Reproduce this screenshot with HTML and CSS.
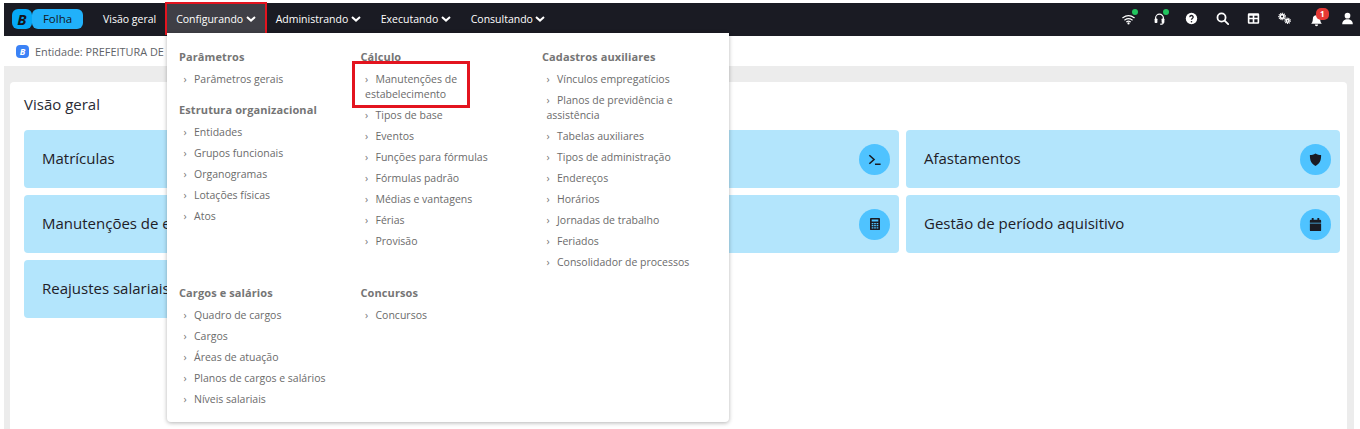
FILE: index.html
```html
<!DOCTYPE html>
<html lang="pt-BR">
<head>
<meta charset="utf-8">
<title>Folha</title>
<link rel="stylesheet" href="styles.css">
</head>
<body>
<div class="page">
  <header class="nav">
    <div class="brand"><span class="brand-b">B</span><span class="brand-name">Folha</span></div>
    <nav class="menu">
      <a class="menu-item">Visão geral</a>
      <a class="menu-item active">Configurando <svg class="chev" viewBox="0 0 10 6"><path d="M1 1l4 3.6L9 1"/></svg></a>
      <a class="menu-item">Administrando <svg class="chev" viewBox="0 0 10 6"><path d="M1 1l4 3.6L9 1"/></svg></a>
      <a class="menu-item">Executando <svg class="chev" viewBox="0 0 10 6"><path d="M1 1l4 3.6L9 1"/></svg></a>
      <a class="menu-item">Consultando <svg class="chev" viewBox="0 0 10 6"><path d="M1 1l4 3.6L9 1"/></svg></a>
    </nav>
    <div class="tools">
      <span class="tool"><svg viewBox="0 0 16 16"><path class="s" d="M1 7c4.200-3 9.800-3 14 0M3.400 9.700c2.800-2 6.400-2 9.200 0M5.800 12c1.400-.8 3-.8 4.400 0"/><circle class="f" cx="8" cy="14" r="1.400"/></svg><i class="dot"></i></span>
      <span class="tool"><svg viewBox="0 0 16 16"><path class="s" d="M3.200 10V7.500a4.800 4.800 0 0 1 9.600 0V10"/><rect class="f" x="2" y="8" width="3.400" height="5.500" rx="1"/><rect class="f" x="10.600" y="8" width="3.400" height="5.500" rx="1"/><path class="s" d="M12.500 13.500c0 1-1 1.500-3 1.500"/></svg><i class="dot"></i></span>
      <span class="tool"><svg viewBox="0 0 16 16"><circle class="f" cx="8" cy="8" r="7"/><path class="q" d="M6 6.300a2 2 0 1 1 3 1.700c-.7.400-1 .8-1 1.500"/><circle class="d" cx="8" cy="12" r="1"/></svg></span>
      <span class="tool"><svg viewBox="0 0 16 16"><circle class="s2" cx="6.800" cy="6.800" r="5"/><path class="s2" d="M10.600 10.600l4.400 4.400"/></svg></span>
      <span class="tool"><svg viewBox="0 0 16 16"><path class="f" fill-rule="evenodd" d="M2.500 1.500h11A1.500 1.500 0 0 1 15 3v10a1.500 1.500 0 0 1-1.500 1.500h-11A1.500 1.500 0 0 1 1 13V3a1.500 1.500 0 0 1 1.500-1.500zM3 4.500V7h4V4.500zm6 0V7h4V4.500zM3 9v3.500h4V9zm6 0v3.500h4V9z"/></svg></span>
      <span class="tool"><svg viewBox="0 0 16 16"><circle class="cog" cx="5" cy="5.500" r="2.300"/><circle class="cog-t" cx="5" cy="5.500" r="4"/><circle class="cog small" cx="11.800" cy="10.800" r="1.800"/><circle class="cog-t" cx="11.800" cy="10.800" r="3.300"/></svg></span>
      <span class="tool bell"><svg viewBox="0 0 16 16"><path class="f" d="M8 1.500a4.500 4.500 0 0 0-4.500 4.500c0 3.500-1.300 4.800-2 6h13c-.7-1.200-2-2.500-2-6A4.500 4.500 0 0 0 8 1.500z"/><path class="f" d="M6 13h4a2 2 0 0 1-4 0z"/></svg><b class="badge">1</b></span>
      <span class="tool"><svg viewBox="0 0 16 16"><circle class="f" cx="8" cy="4.500" r="3.500"/><path class="f" d="M1.500 15c0-3.800 2.800-6 6.500-6s6.500 2.200 6.500 6z"/></svg></span>
    </div>
  </header>

  <div class="entity"><span class="entity-logo">B</span><span>Entidade: PREFEITURA DE D</span></div>

  <main class="content">
    <section class="panel">
      <h1 class="title">Visão geral</h1>
      <div class="cards">
        <div class="card"><span>Matrículas</span></div>
        <div class="card"><span class="circle"><svg viewBox="0 0 16 16"><path class="ci" d="M2.500 3.500L7.500 8l-5 4.500M8.500 13h6"/></svg></span></div>
        <div class="card"><span>Afastamentos</span><span class="circle"><svg viewBox="0 0 16 16"><path class="cf" d="M8 1.500c2 1.300 3.800 1.700 6 1.800 0 6-1.500 9.500-6 11.500-4.500-2-6-5.500-6-11.500 2.200-.1 4-.5 6-1.800z"/></svg></span></div>
        <div class="card"><span>Manutenções de e</span></div>
        <div class="card"><span class="circle"><svg class="calc" viewBox="3 1 10 14" preserveAspectRatio="none"><path class="cf" fill-rule="evenodd" d="M4 1h8a1 1 0 0 1 1 1v12a1 1 0 0 1-1 1H4a1 1 0 0 1-1-1V2a1 1 0 0 1 1-1zM4.700 2.700v2.500h6.600V2.700zm0 4v1.500h1.700V6.700zm2.450 0v1.500h1.700V6.700zm2.450 0v1.500h1.700V6.700zM4.700 9.200v1.500h1.700V9.200zm2.450 0v1.500h1.700V9.200zm2.450 0v1.500h1.700V9.200zM4.700 11.700v1.500h1.700v-1.500zm2.450 0v1.500h1.700v-1.500zm2.450 0v1.500h1.700v-1.500z"/></svg></span></div>
        <div class="card"><span>Gestão de período aquisitivo</span><span class="circle"><svg viewBox="0 0 16 16"><path class="cf" d="M4 1h2v2h4V1h2v2h1a1 1 0 0 1 1 1v2H2V4a1 1 0 0 1 1-1h1zM2 7h12v7a1 1 0 0 1-1 1H3a1 1 0 0 1-1-1z"/></svg></span></div>
        <div class="card"><span>Reajustes salariais</span></div>
      </div>
    </section>
  </main>

  <div class="dropdown">
    <div class="group">
      <h2>Parâmetros</h2>
      <ul><li>Parâmetros gerais</li></ul>
      <h2 class="h-next">Estrutura organizacional</h2>
      <ul><li>Entidades</li><li>Grupos funcionais</li><li>Organogramas</li><li>Lotações físicas</li><li>Atos</li></ul>
    </div>
    <div class="group">
      <h2>Cálculo</h2>
      <ul>
        <li class="marked">Manutenções de estabelecimento</li>
        <li>Tipos de base</li><li>Eventos</li><li>Funções para fórmulas</li><li>Fórmulas padrão</li><li>Médias e vantagens</li><li>Férias</li><li>Provisão</li>
      </ul>
    </div>
    <div class="group">
      <h2>Cadastros auxiliares</h2>
      <ul>
        <li>Vínculos empregatícios</li><li>Planos de previdência e assistência</li><li>Tabelas auxiliares</li><li>Tipos de administração</li><li>Endereços</li><li>Horários</li><li>Jornadas de trabalho</li><li>Feriados</li><li>Consolidador de processos</li>
      </ul>
    </div>
    <div class="group">
      <h2>Cargos e salários</h2>
      <ul><li>Quadro de cargos</li><li>Cargos</li><li>Áreas de atuação</li><li>Planos de cargos e salários</li><li>Níveis salariais</li></ul>
    </div>
    <div class="group">
      <h2>Concursos</h2>
      <ul><li>Concursos</li></ul>
    </div>
  </div>
</div>
</body>
</html>
```
FILE: styles.css
```css
* { box-sizing: border-box; }
html, body { margin: 0; height: 100%; overflow: hidden; background: #fff; }
body { font-family: "Open Sans", sans-serif; color: #1f2027; }
.page { position: relative; height: 429px; padding: 3px 0 0 4px; }

/* top bar */
.nav { height: 33px; background: #1a1b23; display: flex; align-items: flex-start; padding-left: 8px; }
.brand { display: flex; align-items: center; height: 20px; width: 71px; margin-top: 6px; }
.brand-b { width: 20px; height: 20px; background: #06a9f7; border-radius: 6px; color: #14161d; font: italic 700 15px/20px "Open Sans", sans-serif; text-align: center; }
.brand-name { flex: 1; height: 20px; background: #21b1fa; border-radius: 6px; color: #14161d; font-size: 11.500px; font-weight: 500; line-height: 20px; text-align: center; }
.menu { display: flex; align-items: center; height: 31px; margin-left: 10px; }
.menu-item { display: flex; align-items: center; gap: 2.500px; height: 100%; padding: 0 10px; color: #fff; font-size: 10.500px; font-weight: 500; white-space: nowrap; }
.menu-item.active { background: #3f3f46; outline: 2.500px solid #e3141f; outline-offset: -1.500px; }
.chev { width: 10px; height: 6px; fill: none; stroke: #fff; stroke-width: 2; }
.tools { margin-left: auto; display: flex; align-items: center; height: 31px; gap: 16.300px; padding-right: 5px; }
.tool { position: relative; width: 15px; height: 15px; display: flex; align-items: center; justify-content: center; }
.tool svg { display: block; width: 13px; height: 13px; }
.f { fill: #fff; }
.s { fill: none; stroke: #fff; stroke-width: 1.500; stroke-linecap: round; }
.s2 { fill: none; stroke: #fff; stroke-width: 2.200; stroke-linecap: round; }
.q { fill: none; stroke: #1a1b23; stroke-width: 1.700; }
.d { fill: #1a1b23; }
.cog { fill: none; stroke: #fff; stroke-width: 2; }
.cog-t { fill: none; stroke: #fff; stroke-width: 1.400; stroke-dasharray: 1.300 1; }
.dot { position: absolute; top: -2px; right: -2px; width: 6px; height: 6px; border-radius: 50%; background: #22c55e; }
.bell svg { margin-top: 4px; }
.badge { position: absolute; top: -3px; right: -5px; width: 13px; height: 12px; border-radius: 5px; background: #e53935; color: #fff; font-size: 8px; line-height: 12px; text-align: center; }

/* entity */
.entity { height: 30px; display: flex; align-items: center; gap: 6px; padding-left: 12px; color: #5f6368; font-size: 10.900px; white-space: nowrap; }
.entity-logo { width: 13px; height: 13px; border-radius: 4px; background: #3b82f6; color: #fff; font-size: 9px; font-style: italic; font-weight: 700; line-height: 13px; text-align: center; }

/* main */
.content { height: 363px; margin-right: 6px; padding: 16px 7px 0 6px; background: #ececec; }
.panel { height: 100%; background: #fff; padding: 12px 14px; border-radius: 4px 4px 0 0; }
.title { margin: 0 0 15px; font-size: 15px; line-height: 21px; font-weight: 400; color: #2a2c35; }
.cards { display: grid; grid-template-columns: repeat(3, 1fr); grid-auto-rows: 58px; gap: 7px; width: 1316px; }
.card { display: flex; align-items: center; padding: 0 9px 0 18px; background: #b3e5fc; border-radius: 4px; font-size: 15px; white-space: nowrap; }
.card > span:first-child:not(.circle) { padding-bottom: 2px; }
.circle { width: 31px; height: 31px; margin-left: auto; border-radius: 50%; background: #4fc3ff; display: flex; align-items: center; justify-content: center; }
.circle svg { width: 15px; height: 15px; }
.circle svg.calc { width: 10px; height: 12px; }
.ci { fill: none; stroke: #1a1b23; stroke-width: 1.700; }
.cf { fill: #1a1b23; }

/* dropdown */
.dropdown { position: absolute; left: 167px; top: 33px; width: 562px; height: 389px; padding: 16px 12px 0; background: #fff; border-radius: 0 0 4px 4px; box-shadow: 0 1px 4px rgba(0,0,0,.3); display: grid; grid-template-columns: 181.500px 181.500px 1fr; grid-template-rows: 236px 1fr; }
.group h2 { margin: 0 0 4px; font-size: 11px; line-height: 16px; font-weight: 700; color: #757575; letter-spacing: .1px; }
.group h2.h-next { margin-top: 12px; }
.group ul { margin: 0; padding: 0; list-style: none; }
.group li { position: relative; padding: 3px 26px 3px 4.500px; font-size: 10.500px; line-height: 15px; color: #6b6b6b; }
.group li::before { content: "›"; display: inline-block; box-sizing: border-box; width: 10.500px; color: #777; }
.marked { padding-right: 50px !important; }
.marked::after { content: ""; position: absolute; box-sizing: border-box; left: -8.500px; top: -8px; bottom: -3px; width: 118px; border: 3px solid #e3141f; }
```
